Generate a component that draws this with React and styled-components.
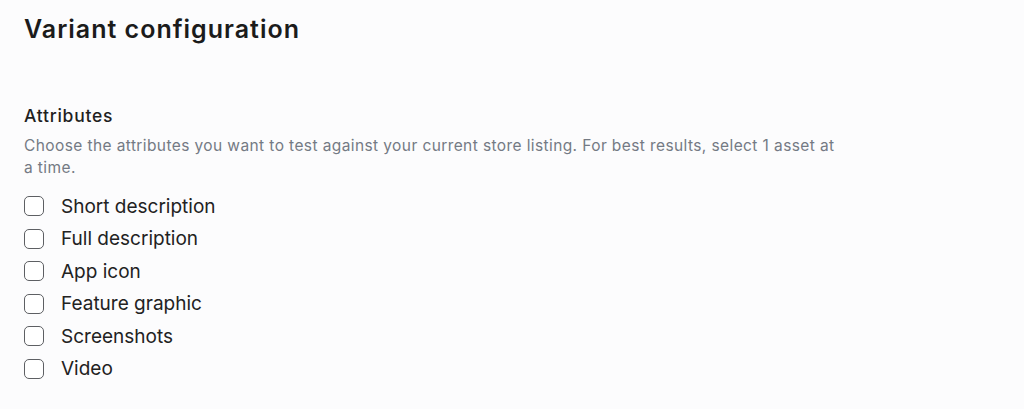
import React from 'react';
import styled, { createGlobalStyle } from 'styled-components';

const GlobalStyle = createGlobalStyle`
  html, body {
    margin: 0;
    padding: 0;
    background: #fcfcfd;
  }
  body {
    font-family: Inter, "Noto Sans", sans-serif;
    color: #1f1f1f;
  }
`;

const Page = styled.main`
  padding: 12px 24px 0 24px;
  width: 1024px;
  height: 409px;
  box-sizing: border-box;
`;

const Title = styled.h1`
  margin: 0;
  font-size: 25px;
  font-weight: 600;
  line-height: 34px;
  color: #1b1b1b;
  letter-spacing: 1px;
`;

const Section = styled.section`
  margin-top: 58px;
`;

const SectionTitle = styled.h2`
  margin: 0;
  font-size: 17.5px;
  font-weight: 500;
  line-height: 24px;
  color: #1f1f1f;
  letter-spacing: 0.75px;
`;

const Description = styled.p`
  margin: 7px 0 0 0;
  max-width: 815px;
  font-size: 15.5px;
  line-height: 22px;
  color: #747a84;
  letter-spacing: 0.4px;
`;

const OptionList = styled.ul`
  list-style: none;
  margin: 15px 0 0 0;
  padding: 0;
  display: flex;
  flex-direction: column;
  gap: 8.6px;
`;

const Option = styled.li`
  display: flex;
  align-items: center;
  gap: 17px;
  height: 24px;
  font-size: 19px;
  color: #222222;
  cursor: pointer;
`;

const Box = styled.span`
  width: 20px;
  height: 20px;
  box-sizing: border-box;
  border: 1.6px solid #5d5f63;
  border-radius: 5px;
  background: #fff;
  flex-shrink: 0;
`;

const options = [
  'Short description',
  'Full description',
  'App icon',
  'Feature graphic',
  'Screenshots',
  'Video',
];

const App = () => (
  <>
    <GlobalStyle />
    <Page>
      <Title>Variant configuration</Title>
      <Section>
        <SectionTitle>Attributes</SectionTitle>
        <Description>
          Choose the attributes you want to test against your current store listing. For best results, select 1 asset at
          a time.
        </Description>
        <OptionList>
          {options.map((o) => (
            <Option key={o}>
              <Box />
              {o}
            </Option>
          ))}
        </OptionList>
      </Section>
    </Page>
  </>
);

export default App;
